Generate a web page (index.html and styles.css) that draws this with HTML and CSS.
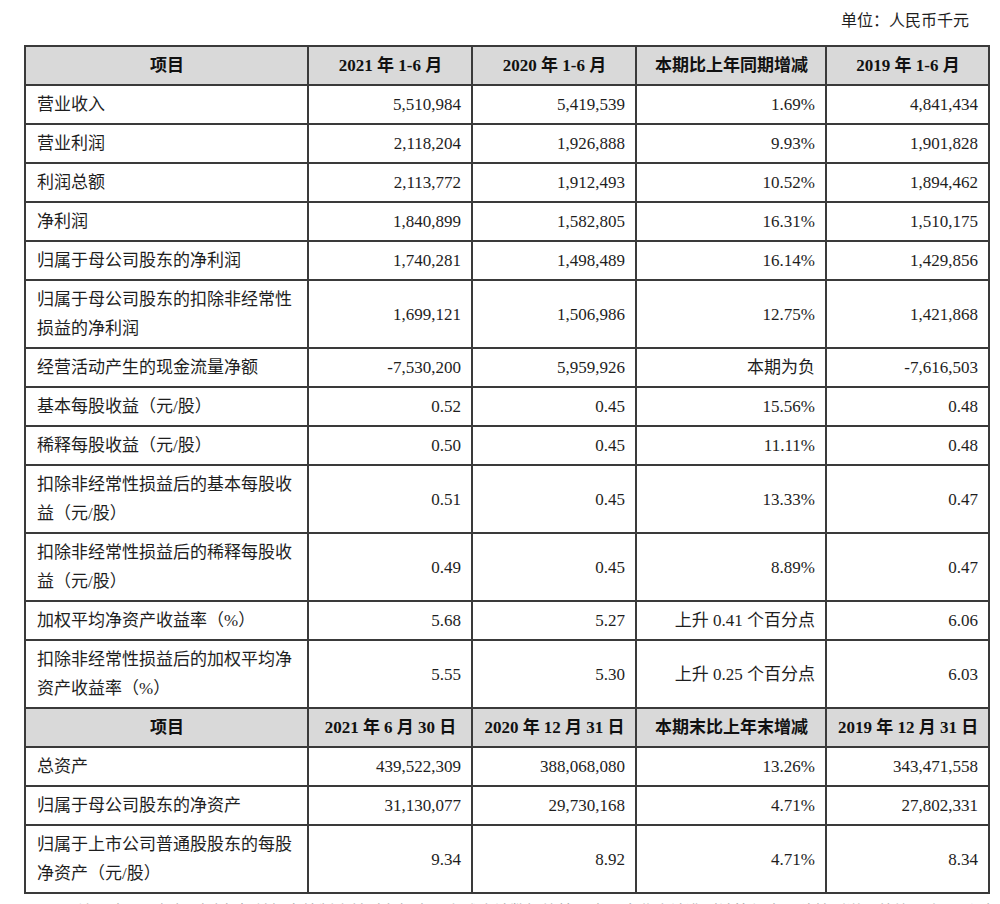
FILE: index.html
```html
<!DOCTYPE html>
<html lang="zh-CN">
<head>
<meta charset="utf-8">
<title>主要会计数据</title>
<link rel="stylesheet" href="styles.css">
</head>
<body>
<div class="page">
  <div class="unit">单位：人民币千元</div>
  <table class="fin">
    <colgroup>
      <col class="c1"><col class="c2"><col class="c3"><col class="c4"><col class="c5">
    </colgroup>
    <tr class="head">
      <th>项目</th><th>2021 年 1-6 月</th><th>2020 年 1-6 月</th><th>本期比上年同期增减</th><th>2019 年 1-6 月</th>
    </tr>
    <tr><td class="lbl">营业收入</td><td>5,510,984</td><td>5,419,539</td><td>1.69%</td><td>4,841,434</td></tr>
    <tr><td class="lbl">营业利润</td><td>2,118,204</td><td>1,926,888</td><td>9.93%</td><td>1,901,828</td></tr>
    <tr><td class="lbl">利润总额</td><td>2,113,772</td><td>1,912,493</td><td>10.52%</td><td>1,894,462</td></tr>
    <tr><td class="lbl">净利润</td><td>1,840,899</td><td>1,582,805</td><td>16.31%</td><td>1,510,175</td></tr>
    <tr><td class="lbl">归属于母公司股东的净利润</td><td>1,740,281</td><td>1,498,489</td><td>16.14%</td><td>1,429,856</td></tr>
    <tr><td class="lbl">归属于母公司股东的扣除非经常性<br>损益的净利润</td><td>1,699,121</td><td>1,506,986</td><td>12.75%</td><td>1,421,868</td></tr>
    <tr><td class="lbl">经营活动产生的现金流量净额</td><td>-7,530,200</td><td>5,959,926</td><td>本期为负</td><td>-7,616,503</td></tr>
    <tr><td class="lbl">基本每股收益（元/股）</td><td>0.52</td><td>0.45</td><td>15.56%</td><td>0.48</td></tr>
    <tr><td class="lbl">稀释每股收益（元/股）</td><td>0.50</td><td>0.45</td><td>11.11%</td><td>0.48</td></tr>
    <tr><td class="lbl">扣除非经常性损益后的基本每股收<br>益（元/股）</td><td>0.51</td><td>0.45</td><td>13.33%</td><td>0.47</td></tr>
    <tr><td class="lbl">扣除非经常性损益后的稀释每股收<br>益（元/股）</td><td>0.49</td><td>0.45</td><td>8.89%</td><td>0.47</td></tr>
    <tr><td class="lbl">加权平均净资产收益率（%）</td><td>5.68</td><td>5.27</td><td>上升 0.41 个百分点</td><td>6.06</td></tr>
    <tr><td class="lbl">扣除非经常性损益后的加权平均净<br>资产收益率（%）</td><td>5.55</td><td>5.30</td><td>上升 0.25 个百分点</td><td>6.03</td></tr>
    <tr class="head">
      <th>项目</th><th>2021 年 6 月 30 日</th><th>2020 年 12 月 31 日</th><th>本期末比上年末增减</th><th>2019 年 12 月 31 日</th>
    </tr>
    <tr><td class="lbl">总资产</td><td>439,522,309</td><td>388,068,080</td><td>13.26%</td><td>343,471,558</td></tr>
    <tr><td class="lbl">归属于母公司股东的净资产</td><td>31,130,077</td><td>29,730,168</td><td>4.71%</td><td>27,802,331</td></tr>
    <tr><td class="lbl">归属于上市公司普通股股东的每股<br>净资产（元/股）</td><td>9.34</td><td>8.92</td><td>4.71%</td><td>8.34</td></tr>
  </table>
  <p class="note">注：本公司根据财政部相关规定编制合并财务报表，上述会计数据均按照中国企业会计准则计算得出，除特别说明外均以人民币列示。</p>
</div>
</body>
</html>
```

FILE: styles.css
```css
html, body {
  margin: 0;
  padding: 0;
  background: #ffffff;
}

.page {
  width: 1000px;
  height: 904px;
  overflow: hidden;
  font-family: "Liberation Serif", "Noto Sans CJK SC", serif;
  color: #1e1e1e;
}

.unit {
  height: 45px;
  line-height: 42px;
  text-align: right;
  padding-right: 31px;
  font-size: 16px;
  box-sizing: border-box;
}

.fin {
  margin-left: 24px;
  width: 964px;
  border-collapse: collapse;
  table-layout: fixed;
  font-size: 17px;
}

.c1 { width: 283px; }
.c2 { width: 164px; }
.c3 { width: 164px; }
.c4 { width: 190px; }
.c5 { width: 163px; }

.fin th,
.fin td {
  border: 2px solid #3a3a3a;
  padding: 4px 10px 4px 11px;
  line-height: 29px;
  white-space: nowrap;
}

.fin td {
  text-align: right;
  font-weight: normal;
}

.fin td.lbl {
  text-align: left;
}

.head th {
  background: #d9d9d9;
  text-align: center;
  font-weight: bold;
  color: #111;
}

.note {
  margin: 10px 0 0 78px;
  font-size: 16px;
  line-height: 16px;
  color: #a8a8a8;
  white-space: nowrap;
}
```
